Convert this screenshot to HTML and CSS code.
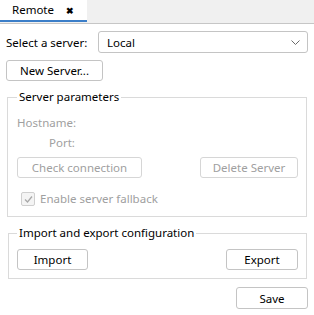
FILE: index.html
```html
<!DOCTYPE html>
<html lang="en">
<head>
    <meta charset="UTF-8">
    <title>Remote</title>
    <link rel="stylesheet" href="styles.css">
</head>
<body>
    <div class="tab-bar">
        <div class="tab">
            <span class="tab-title">Remote</span>
            <span class="tab-close">&#x2716;</span>
        </div>
    </div>

    <div class="panel">
        <!-- Server choice -->
        <div class="server-row">
            <label class="server-label">Select a server:</label>
            <div class="select">
                <span>Local</span>
                <svg class="chevron" width="9" height="5" viewBox="0 0 9 5">
                    <path d="M0.5 0.5 L4.5 4.5 L8.5 0.5" fill="none" stroke="#6a6a6a" stroke-width="1"/>
                </svg>
            </div>
        </div>
        <button class="btn btn-new">New Server...</button>

        <!-- Server parameters -->
        <fieldset class="group group-params">
            <legend>Server parameters</legend>
            <div class="field disabled">Hostname:</div>
            <div class="field field-port disabled">Port:</div>
            <div class="btn-row">
                <button class="btn btn-check" disabled>Check connection</button>
                <button class="btn btn-delete" disabled>Delete Server</button>
            </div>
            <div class="check-row disabled">
                <span class="checkbox">
                    <svg width="11" height="11" viewBox="0 0 11 11">
                        <path d="M2 5.5 L4.5 8 L9 2.5" fill="none" stroke="#a8a8a8" stroke-width="1.3"/>
                    </svg>
                </span>
                <span>Enable server fallback</span>
            </div>
        </fieldset>

        <!-- Import / export -->
        <fieldset class="group group-io">
            <legend>Import and export configuration</legend>
            <div class="btn-row">
                <button class="btn btn-import">Import</button>
                <button class="btn btn-export">Export</button>
            </div>
        </fieldset>

        <div class="footer">
            <button class="btn btn-save">Save</button>
        </div>
    </div>
</body>
</html>
```

FILE: styles.css
```css
body {
    margin: 0;
    background: #ffffff;
    font-family: 'Noto Sans', 'Open Sans', sans-serif;
    font-size: 11.5px;
    color: #000000;
}

.tab-bar {
    display: flex;
    height: 23px;
    background: #f0f0f0;
    border-bottom: 1px solid #c6c6c6;
}

.tab {
    display: flex;
    align-items: center;
    width: 87px;
    height: 22px;
    padding-left: 12px;
    box-sizing: border-box;
    background: #ffffff;
    border-bottom: 2px solid #3b7ec8;
    margin-bottom: -1px;
}

.tab-title {
    line-height: 16px;
}

.tab-close {
    margin-left: 12px;
    font-size: 9px;
    font-weight: bold;
    color: #000000;
}

.panel {
    padding: 7px 6px 0;
}

.server-row {
    display: flex;
    align-items: center;
    height: 22px;
}

.server-label {
    width: 92px;
}

.select {
    flex: 1;
    display: flex;
    align-items: center;
    justify-content: space-between;
    height: 22px;
    box-sizing: border-box;
    padding: 0 7px 0 8px;
    border: 1px solid #c4c4c4;
    border-radius: 3px;
    background: #ffffff;
}

.btn {
    display: block;
    height: 21px;
    padding: 0;
    box-sizing: border-box;
    font-family: inherit;
    font-size: 11.5px;
    color: #000000;
    background: #ffffff;
    border: 1px solid #c4c4c4;
    border-radius: 3px;
}

.btn:disabled {
    color: #a0a0a0;
    border-color: #d6d6d6;
}

.btn-new {
    width: 97px;
    margin-top: 7px;
}

.group {
    margin: 8px 1px 0;
    padding: 0 8px 9px 9px;
    border: 1px solid #dadada;
}

.group legend {
    padding: 0 2px;
    margin-left: 0;
    line-height: 16px;
}

.disabled {
    color: #a0a0a0;
}

.field {
    line-height: 16px;
}

.group-params .field:first-of-type {
    margin-top: 10px;
}

.field-port {
    margin-top: 4px;
    padding-left: 32px;
}

.btn-row {
    display: flex;
    justify-content: space-between;
}

.group-params .btn-row {
    margin-top: 6px;
}

.btn-check {
    width: 125px;
}

.btn-delete {
    width: 98px;
}

.check-row {
    display: flex;
    align-items: center;
    gap: 5px;
    margin-top: 13px;
    padding-left: 4px;
    line-height: 16px;
}

.checkbox {
    display: flex;
    align-items: center;
    justify-content: center;
    width: 12px;
    height: 12px;
    border: 1px solid #cfcfcf;
    border-radius: 2px;
    background: #f4f4f4;
}

.group-io {
    margin-left: 2px;
    padding: 0 8px 8px 8px;
}

.group-io .btn-row {
    margin-top: 8px;
}

.btn-import {
    width: 71px;
}

.btn-export {
    width: 72px;
}

.footer {
    display: flex;
    justify-content: flex-end;
    margin-top: 8px;
}

.btn-save {
    width: 72px;
    height: 22px;
}
```
